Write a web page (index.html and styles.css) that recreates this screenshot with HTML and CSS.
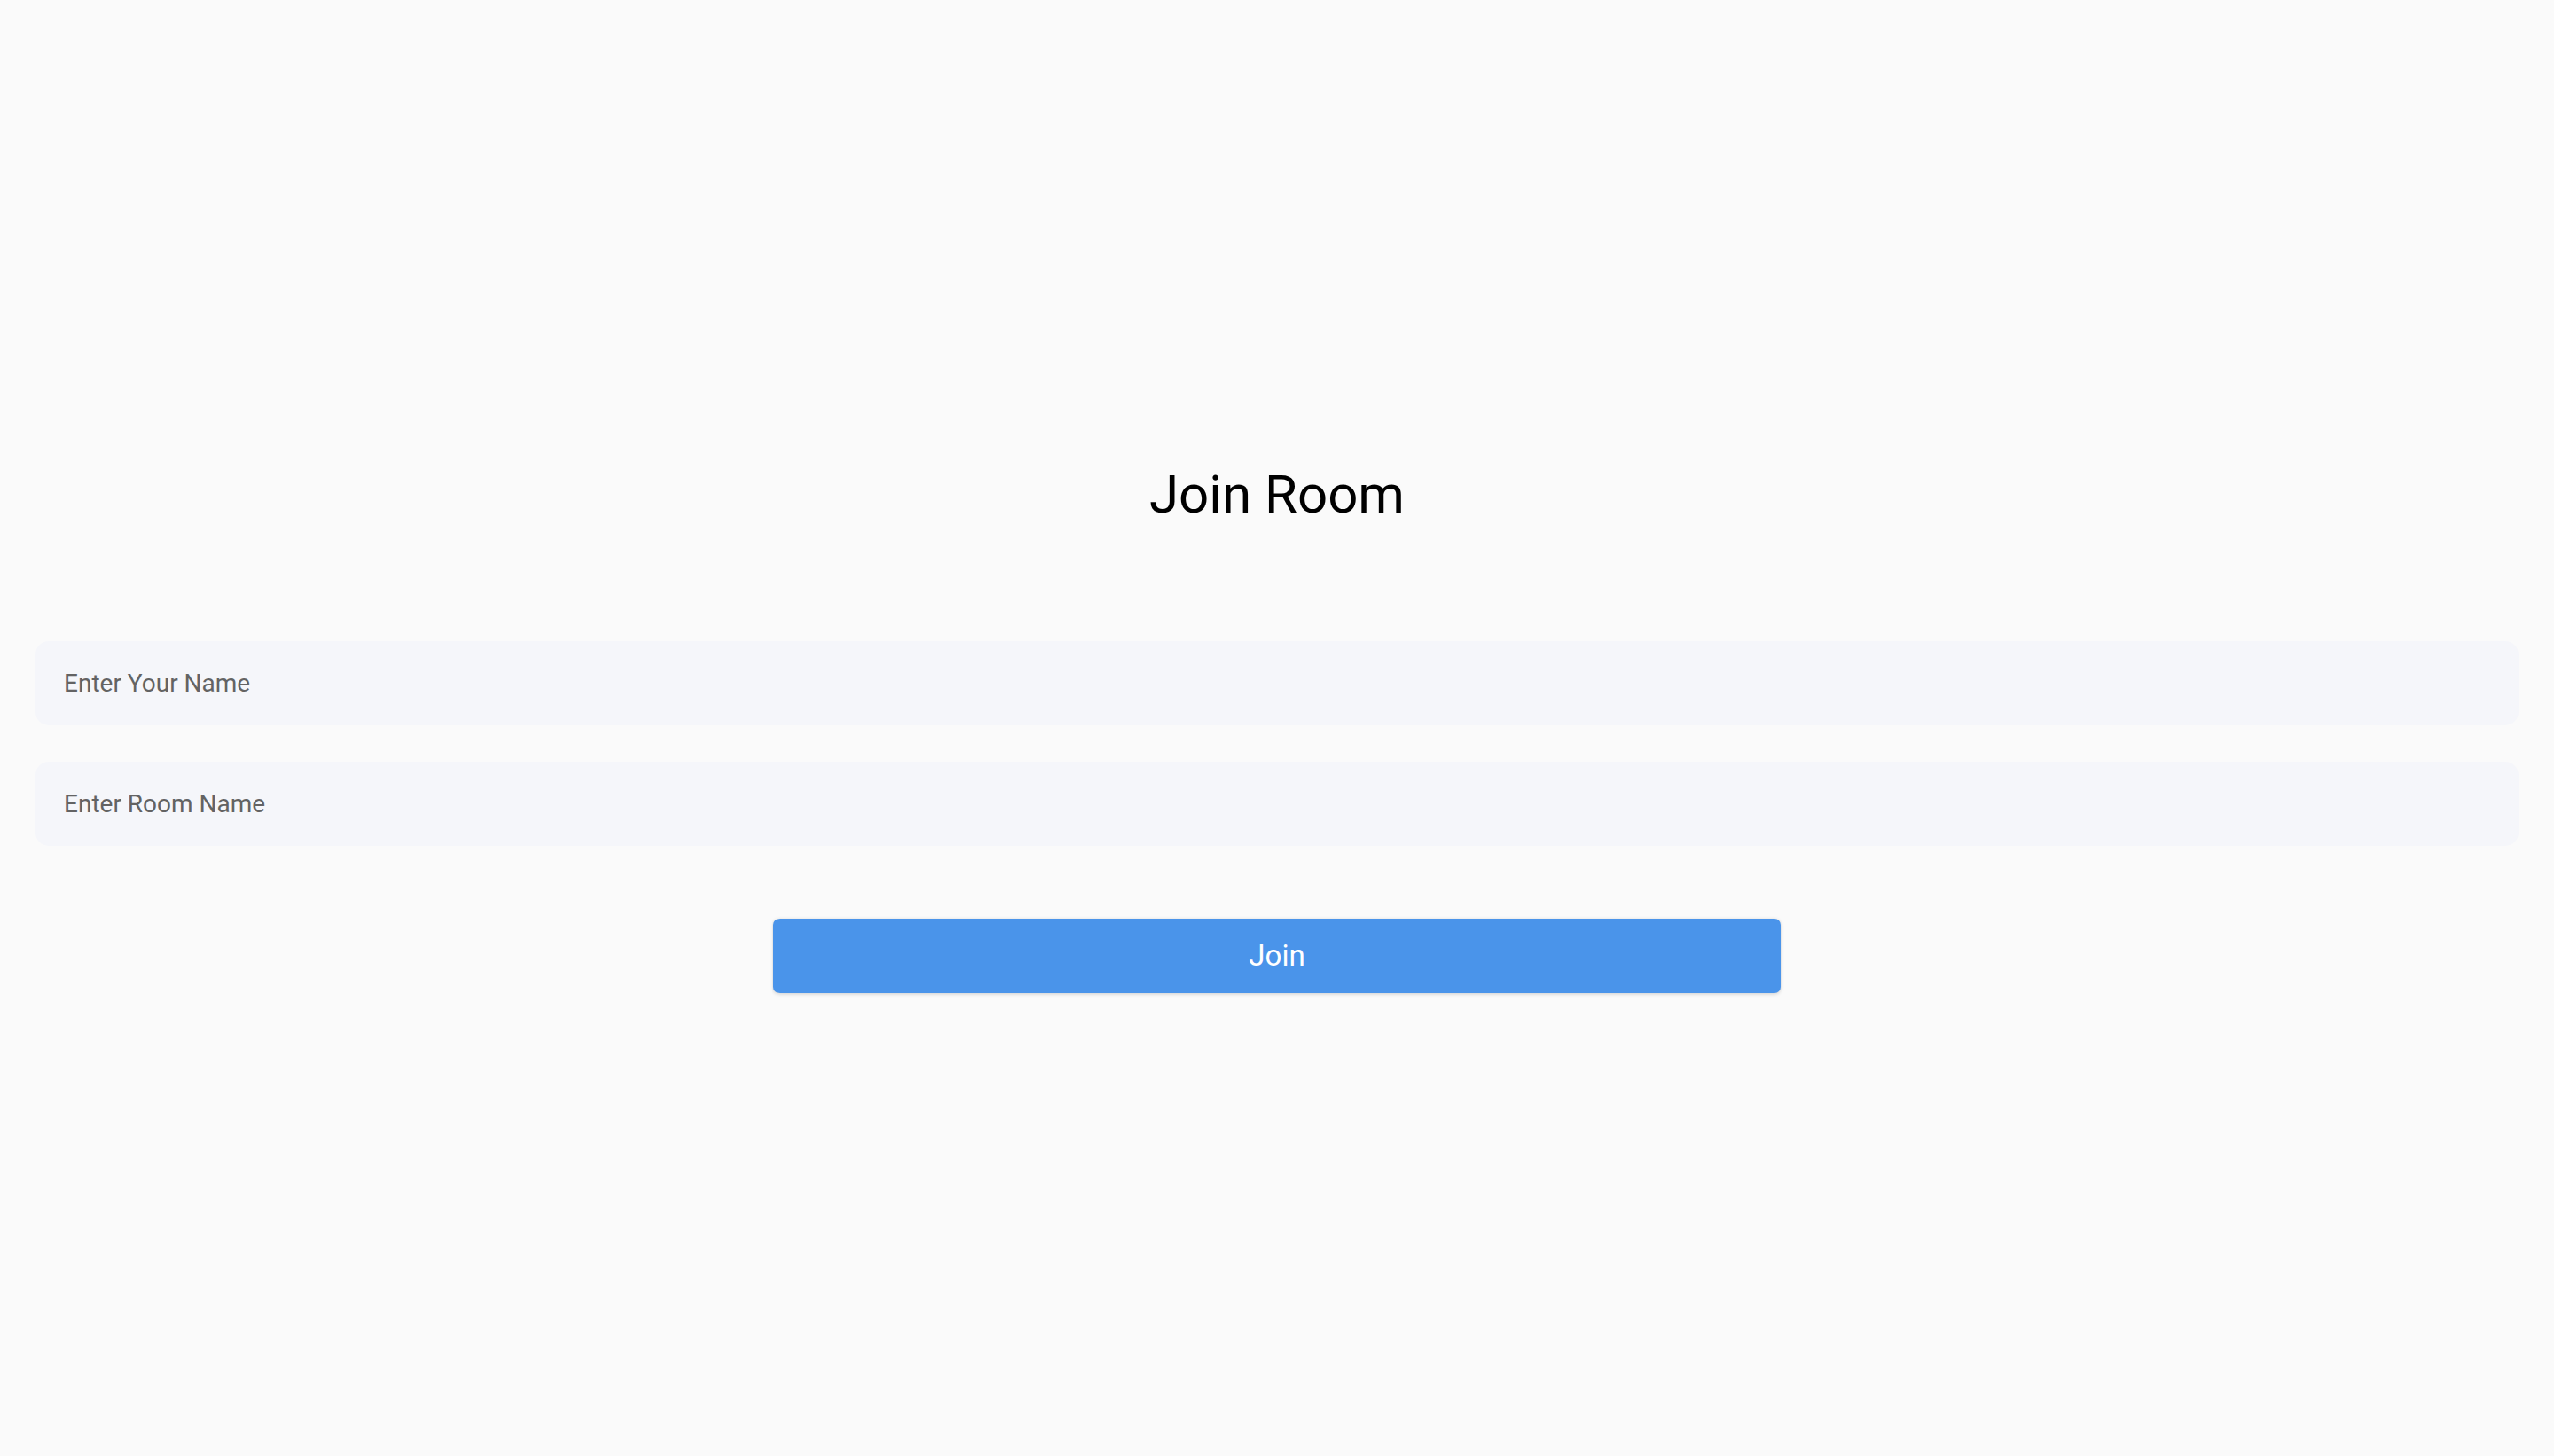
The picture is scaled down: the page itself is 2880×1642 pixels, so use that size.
FILE: index.html
```html
<!DOCTYPE html>
<html lang="en">
<head>
<meta charset="utf-8">
<title>Join Room</title>
<link rel="stylesheet" href="styles.css">
</head>
<body>
<main class="page">
  <h1 class="title">Join Room</h1>
  <form class="form">
    <input class="field" type="text" placeholder="Enter Your Name">
    <input class="field field-room" type="text" placeholder="Enter Room Name">
    <button class="join" type="button">Join</button>
  </form>
</main>
</body>
</html>
```

FILE: styles.css
```css
html, body {
  margin: 0;
  padding: 0;
  background: #fafafa;
  font-family: Roboto, "Liberation Sans", Arial, sans-serif;
}

.page {
  min-height: 100vh;
  box-sizing: border-box;
  display: flex;
  flex-direction: column;
  justify-content: center;
  align-items: stretch;
  padding: 0 40px;
}

.title {
  margin: 0 0 130px;
  text-align: center;
  font-weight: 400;
  font-size: 60px;
  line-height: 70px;
  color: #000;
}

.form {
  display: flex;
  flex-direction: column;
  align-items: center;
}

.field {
  box-sizing: border-box;
  width: 100%;
  height: 95px;
  border: none;
  outline: none;
  border-radius: 15px;
  background: #f5f6fa;
  padding: 0 32px;
  font-family: Roboto, "Liberation Sans", Arial, sans-serif;
  font-size: 28px;
  color: #222;
}

.field::placeholder {
  color: #636363;
}

.field-room {
  margin-top: 41px;
}

.join {
  margin-top: 82px;
  width: 1136px;
  height: 84px;
  border: none;
  border-radius: 7px;
  background: #4a94ea;
  color: #fff;
  font-family: Roboto, "Liberation Sans", Arial, sans-serif;
  font-size: 33px;
  box-shadow: 0 1px 4px rgba(0, 0, 0, 0.18);
  cursor: pointer;
}
```
